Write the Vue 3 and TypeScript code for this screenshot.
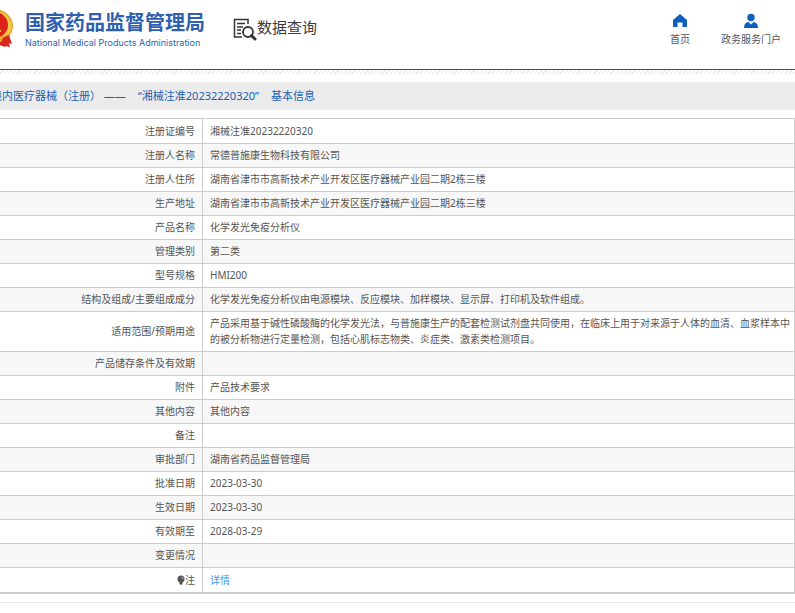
<script setup lang="ts">
interface Row {
  label: string
  value: string
  link?: boolean
  marked?: boolean
}

const rows: Row[] = [
  { label: '注册证编号', value: '湘械注准20232220320' },
  { label: '注册人名称', value: '常德普施康生物科技有限公司' },
  { label: '注册人住所', value: '湖南省津市市高新技术产业开发区医疗器械产业园二期2栋三楼' },
  { label: '生产地址', value: '湖南省津市市高新技术产业开发区医疗器械产业园二期2栋三楼' },
  { label: '产品名称', value: '化学发光免疫分析仪' },
  { label: '管理类别', value: '第二类' },
  { label: '型号规格', value: 'HMI200' },
  { label: '结构及组成/主要组成成分', value: '化学发光免疫分析仪由电源模块、反应模块、加样模块、显示屏、打印机及软件组成。' },
  { label: '适用范围/预期用途', value: '产品采用基于碱性磷酸酶的化学发光法，与普施康生产的配套检测试剂盘共同使用，在临床上用于对来源于人体的血清、血浆样本中的被分析物进行定量检测，包括心肌标志物类、炎症类、激素类检测项目。' },
  { label: '产品储存条件及有效期', value: '' },
  { label: '附件', value: '产品技术要求' },
  { label: '其他内容', value: '其他内容' },
  { label: '备注', value: '' },
  { label: '审批部门', value: '湖南省药品监督管理局' },
  { label: '批准日期', value: '2023-03-30' },
  { label: '生效日期', value: '2023-03-30' },
  { label: '有效期至', value: '2028-03-29' },
  { label: '变更情况', value: '' },
  { label: '注', value: '详情', link: true, marked: true },
]
</script>

<template>
  <div class="page">
    <header class="header">
      <a class="brand" href="#">
        <svg class="emblem" viewBox="0 0 40 40" aria-hidden="true">
          <path d="M10 30 L6 38 L14 37 L20 33 L26 37 L36 39 L33 29 Z" fill="#d8261c" />
          <ellipse cx="20" cy="18" rx="19" ry="17" fill="#e9a52b" />
          <ellipse cx="20" cy="18" rx="17.500" ry="15.500" fill="#f6c94c" />
          <ellipse cx="19" cy="17" rx="15" ry="13.500" fill="#dc2318" />
          <path d="M10 22 H27 V24 H10 Z M13 18 H25 V20 H13 Z" fill="#f4bd3e" />
          <path d="M7 27 Q20 33 33 26 L35 29 Q20 39 5 30 Z" fill="#e9a52b" />
          <path d="M29 30 L35 27 L38 36 L34 35 L31 39 L26 37 Z" fill="#d8261c" />
        </svg>
        <span class="names">
          <span class="name-zh">国家药品监督管理局</span>
          <span class="name-en">National Medical Products Administration</span>
        </span>
      </a>
      <div class="section">
        <svg class="search-icon" viewBox="0 0 24 24" aria-hidden="true">
          <path d="M15 7 V2.500 H1.500 V20 H9 M4 6.500 H12 M4 10 H10 M4 13 H8 M4 16.500 H8" fill="none" stroke="#33333d" stroke-width="1.500" />
          <circle cx="15" cy="15" r="5" fill="#fff" stroke="#33333d" stroke-width="1.800" />
          <path d="M18.500 18.500 L22 22" stroke="#33333d" stroke-width="3" stroke-linecap="round" />
        </svg>
        <span class="section-name">数据查询</span>
      </div>
      <nav class="nav">
        <a href="#">
          <svg viewBox="0 0 16 16" aria-hidden="true">
            <path d="M8 1 L15 7 V14 H10.500 V9.500 H5.500 V14 H1 V7 Z" fill="#0f5fbe" />
          </svg>
          <span>首页</span>
        </a>
        <a href="#">
          <svg viewBox="0 0 16 16" aria-hidden="true">
            <circle cx="8" cy="4.500" r="3.700" fill="#0f5fbe" />
            <path d="M1 15 Q1 9.500 5.500 9 L8 11.500 L10.500 9 Q15 9.500 15 15 Z" fill="#0f5fbe" />
          </svg>
          <span>政务服务门户</span>
        </a>
      </nav>
    </header>
    <div class="hatch"></div>

    <main class="content">
      <h1 class="title">
        <span>境内医疗器械（注册） ——</span>
        <span>“湘械注准20232220320”</span>
        <span>基本信息</span>
      </h1>
      <table class="info">
        <tbody>
          <tr v-for="row in rows" :key="row.label">
            <th scope="row">
              <svg v-if="row.marked" class="bulb" viewBox="0 0 8 10" aria-hidden="true">
                <circle cx="4" cy="4" r="3.500" fill="#555" />
                <path d="M2.500 7 H5.500 V9 L4 10 L2.500 9 Z" fill="#555" />
                <path d="M4.500 2 Q6 2.500 6 4" fill="none" stroke="#ddd" stroke-width="0.800" />
              </svg>{{ row.label }}
            </th>
            <td>
              <a v-if="row.link" href="#">{{ row.value }}</a>
              <template v-else>{{ row.value }}</template>
            </td>
          </tr>
        </tbody>
      </table>
    </main>
    <footer class="footer"></footer>
  </div>
</template>

<style>
body {
  margin: 0;
  background: #fff;
}
</style>

<style scoped>
.page {
  overflow: hidden;
  font-family: "Noto Sans", "Noto Sans CJK SC", sans-serif;
  font-size: 10px;
  line-height: 16px;
  color: #555;
}

a {
  color: inherit;
  text-decoration: none;
}

.header {
  display: flex;
  align-items: flex-start;
  box-sizing: border-box;
  height: 70px;
  padding-right: 14px;
  border-bottom: 1px solid #1b5f8f;
}

.brand {
  display: flex;
  gap: 11px;
  margin-left: -26px;
  padding-top: 8px;
  color: #2f5fae;
}

.emblem {
  width: 40px;
  height: 40px;
}

.names {
  display: flex;
  flex-direction: column;
  padding-top: 3px;
  white-space: nowrap;
}

.name-zh {
  font-size: 20px;
  font-weight: 700;
  line-height: 24px;
}

.name-en {
  font-family: Inter, sans-serif;
  font-size: 9px;
  line-height: 16px;
}

.section {
  display: flex;
  align-items: flex-end;
  margin-left: 28px;
  padding-top: 15px;
  font-size: 15px;
  line-height: 24px;
  color: #3c3c3c;
}

.section-name {
  padding-bottom: 2px;
}

.search-icon {
  width: 24px;
  height: 24px;
}

.nav {
  display: flex;
  gap: 31px;
  margin-left: auto;
  padding-top: 13px;
}

.nav a {
  display: flex;
  flex-direction: column;
  align-items: center;
  gap: 2px;
}

.nav svg {
  width: 16px;
  height: 16px;
}

.hatch {
  height: 4px;
  background: repeating-linear-gradient(135deg, #fff 0 2px, #e4eaee 2px 3px);
}

.content {
  margin-left: -9px;
}

.title {
  display: flex;
  gap: 12px;
  margin: 8px 0;
  background: #ebebeb;
  color: #1a5fb0;
  font-size: 11px;
  font-weight: 400;
  line-height: 28px;
  white-space: nowrap;
}

.info {
  width: 100%;
  border-collapse: collapse;
  border: 1px solid #ccc;
}

.info tr:nth-child(even) {
  background: #f7f7f7;
}

.info th,
.info td {
  height: 16px;
  padding: 3px 2px 4px 7px;
  border: 1px solid #ccc;
  font-weight: 400;
}

.info th {
  width: 196px;
  padding-right: 7px;
  text-align: right;
}

.info tr:first-child > *,
.info tr:last-child > * {
  height: 17px;
}

.info tr:last-child > * {
  border-bottom-width: 2px;
}

.info td a {
  color: #3c96f0;
}

.bulb {
  width: 8px;
  height: 10px;
  vertical-align: -1px;
}

.footer {
  margin-top: 8px;
  border-top: 1px solid #e8e8e8;
}
</style>
